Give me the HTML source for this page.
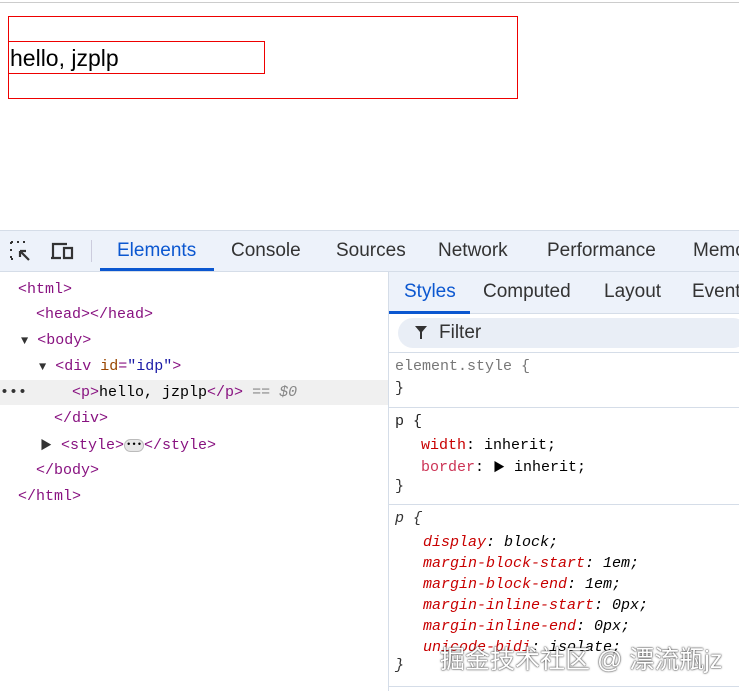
<!DOCTYPE html><html><head><style>
*{margin:0;padding:0;box-sizing:border-box}
body{width:739px;height:691px;overflow:hidden;background:#fff;position:relative;font-family:"Liberation Sans",sans-serif}
.a{position:absolute;white-space:nowrap}
.m{font-family:"Liberation Mono","Noto Serif CJK SC",monospace;font-size:15px}
.t{color:#881280}.an{color:#994500}.av{color:#1a1aa6}
.pn{color:#c80000}
.i{font-style:italic}
</style></head><body>
<div class="a" style="left:0;top:2px;width:739px;height:1px;background:#ccc"></div>
<div class="a" style="left:8px;top:16px;width:510px;height:83px;border:1px solid #e00"></div>
<div class="a" style="left:8px;top:41px;width:257px;height:33px;border:1px solid #e00"></div>
<div class="a" style="left:10px;top:45px;font-size:23px;color:#000">hello, jzplp</div>

<div class="a" style="left:0;top:230px;width:739px;height:42px;background:#edf2fa;border-top:1px solid #d5dde8;border-bottom:1px solid #d5dde8"></div>
<svg class="a" style="left:9px;top:240px" width="24" height="22" viewBox="0 0 24 22"><path d="M2 2h3M8 2h3M14 2h3M2 2v3M2 9v3M2 16v3M2 19h3" stroke="#333" stroke-width="2" stroke-dasharray="2 2" fill="none"/><path d="M20 20L11 11M11 11v6M11 11h6" stroke="#333" stroke-width="2.2" fill="none"/></svg>
<svg class="a" style="left:50px;top:241px" width="26" height="20"><path d="M3 17V3h14M1 17h10M14 7h8v10h-8z" stroke="#333" stroke-width="2.2" fill="none"/></svg>
<div class="a" style="left:91px;top:240px;width:1px;height:22px;background:#ccd"></div>
<div class="a" style="left:117px;top:240px;font-size:19px;color:#0b57d0">Elements</div>
<div class="a" style="left:100px;top:268px;width:114px;height:3px;background:#0b57d0"></div>
<div class="a" style="left:231px;top:240px;font-size:19px;color:#333">Console</div>
<div class="a" style="left:336px;top:240px;font-size:19px;color:#333">Sources</div>
<div class="a" style="left:438px;top:240px;font-size:19px;color:#333">Network</div>
<div class="a" style="left:547px;top:240px;font-size:19px;color:#333">Performance</div>
<div class="a" style="left:693px;top:240px;font-size:19px;color:#333">Memo</div>

<div class="a" style="left:388px;top:272px;width:1px;height:419px;background:#d5dde8"></div>
<div class="a" style="left:0;top:380px;width:388px;height:25px;background:#f0f0f0"></div>
<div class="a m" style="left:18px;top:281px"><span class="t">&lt;html&gt;</span></div>
<div class="a m" style="left:36px;top:306px"><span class="t">&lt;head&gt;&lt;/head&gt;</span></div>
<div class="a m" style="left:21px;top:332px"><span style="color:#333;font-size:12px">▼</span> <span class="t">&lt;body&gt;</span></div>
<div class="a m" style="left:39px;top:358px"><span style="color:#333;font-size:12px">▼</span> <span class="t">&lt;div </span><span class="an">id</span><span class="t">=</span><span class="av">"idp"</span><span class="t">&gt;</span></div>
<div class="a m" style="left:0;top:384px;color:#333">•••</div>
<div class="a m" style="left:72px;top:384px"><span class="t">&lt;p&gt;</span>hello, jzplp<span class="t">&lt;/p&gt;</span> <span class="i" style="color:#888">== $0</span></div>
<div class="a m" style="left:54px;top:410px"><span class="t">&lt;/div&gt;</span></div>
<div class="a m" style="left:40px;top:436px"><span style="color:#333;font-size:12px">▶</span> <span class="t">&lt;style&gt;</span><span style="display:inline-block;width:20px;height:13px;border-radius:7px;background:#e6e6e6;border:1px solid #bbb;font-size:9px;line-height:10px;text-align:center;vertical-align:middle">•••</span><span class="t">&lt;/style&gt;</span></div>
<div class="a m" style="left:36px;top:462px"><span class="t">&lt;/body&gt;</span></div>
<div class="a m" style="left:18px;top:488px"><span class="t">&lt;/html&gt;</span></div>

<div class="a" style="left:389px;top:272px;width:350px;height:42px;background:#edf2fa;border-bottom:1px solid #d5dde8"></div>
<div class="a" style="left:404px;top:281px;font-size:19px;color:#0b57d0">Styles</div>
<div class="a" style="left:389px;top:311px;width:81px;height:3px;background:#0b57d0"></div>
<div class="a" style="left:483px;top:281px;font-size:19px;color:#333">Computed</div>
<div class="a" style="left:604px;top:281px;font-size:19px;color:#333">Layout</div>
<div class="a" style="left:692px;top:281px;font-size:19px;color:#333">Event</div>
<div class="a" style="left:398px;top:318px;width:350px;height:30px;border-radius:15px;background:#e9eef6"></div>
<svg class="a" style="left:414px;top:325px" width="14" height="15"><path d="M1 1h12L8 7v7H6V7z" fill="#333"/></svg>
<div class="a" style="left:439px;top:322px;font-size:19px;color:#333">Filter</div>
<div class="a" style="left:389px;top:352px;width:350px;height:1px;background:#d5dde8"></div>
<div class="a m" style="left:395px;top:358px;color:#777">element.style {</div>
<div class="a m" style="left:395px;top:380px;color:#333">}</div>
<div class="a" style="left:389px;top:407px;width:350px;height:1px;background:#d5dde8"></div>
<div class="a m" style="left:395px;top:413px;color:#222">p {</div>
<div class="a m" style="left:421px;top:437px"><span class="pn">width</span>: inherit;</div>
<div class="a m" style="left:421px;top:458px"><span class="pn" style="color:#c35">border</span>: <span style="font-size:12px">▶</span> inherit;</div>
<div class="a m" style="left:395px;top:478px;color:#333">}</div>
<div class="a" style="left:389px;top:504px;width:350px;height:1px;background:#d5dde8"></div>
<div class="a m i" style="left:395px;top:510px;color:#333">p {</div>
<div class="a m i" style="left:423px;top:534px"><span class="pn">display</span>: block;</div>
<div class="a m i" style="left:423px;top:555px"><span class="pn">margin-block-start</span>: 1em;</div>
<div class="a m i" style="left:423px;top:576px"><span class="pn">margin-block-end</span>: 1em;</div>
<div class="a m i" style="left:423px;top:597px"><span class="pn">margin-inline-start</span>: 0px;</div>
<div class="a m i" style="left:423px;top:618px"><span class="pn">margin-inline-end</span>: 0px;</div>
<div class="a m i" style="left:423px;top:639px"><span class="pn">unicode-bidi</span>: isolate;</div>
<div class="a m i" style="left:395px;top:657px;color:#333">}</div>
<div class="a" style="left:389px;top:686px;width:350px;height:1px;background:#d5dde8"></div>
<div class="a" style="left:440px;top:640px;font-size:25px;color:#fff;font-family:'Liberation Sans','Noto Sans CJK SC',sans-serif;text-shadow:0 0 2px #444,0 0 1px #222">掘金技术社区 @ 漂流瓶jz</div>
</body></html>
